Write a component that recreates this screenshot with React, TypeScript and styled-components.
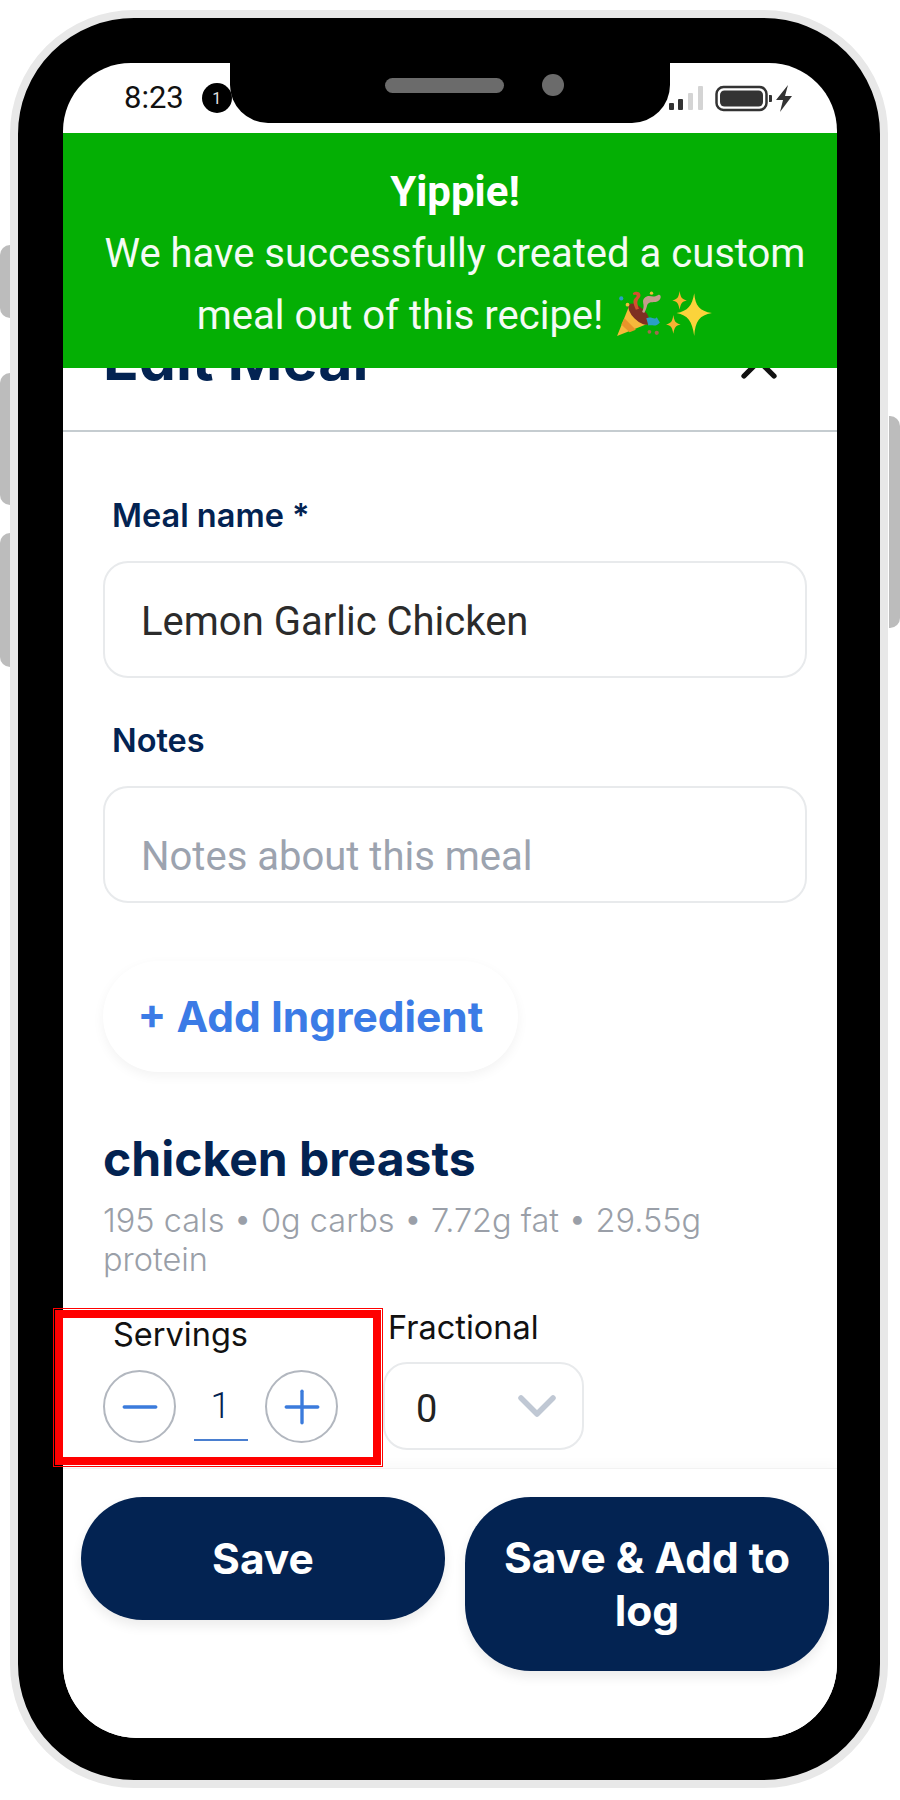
import React from 'react';
import styled, { createGlobalStyle } from 'styled-components';
import { X, Minus, Plus } from 'lucide-react';

const Global = createGlobalStyle`
  html, body { margin: 0; padding: 0; background: #fff; }
  * { box-sizing: border-box; }
`;

const Page = styled.div`
  position: relative;
  width: 900px;
  height: 1800px;
  padding: 10px 12px 12px 10px;
  background: #fff;
  font-family: Inter, "Liberation Sans", sans-serif;
`;

const SideButton = styled.div<{ $side: 'left' | 'right'; $top: number; $h: number }>`
  position: absolute;
  top: ${p => p.$top}px;
  height: ${p => p.$h}px;
  width: 11px;
  background: #bcbcbc;
  ${p => (p.$side === 'left' ? 'left: 0; border-radius: 10px 0 0 10px;' : 'left: 889px; border-radius: 0 10px 10px 0;')}
`;

const Device = styled.div`
  position: relative;
  width: 878px;
  height: 1778px;
  border: 8px solid #e8e8e8;
  border-radius: 124px;
  background: #000;
  padding: 45px 43px 42px 45px;
`;

const Screen = styled.div`
  position: relative;
  height: 100%;
  background: #fff;
  border-radius: 68px 68px 74px 74px;
  overflow: hidden;
  display: flex;
  flex-direction: column;
`;

const Notch = styled.div`
  position: absolute;
  z-index: 3;
  top: 0;
  left: 167px;
  width: 440px;
  height: 60px;
  background: #000;
  border-radius: 0 0 38px 38px;
  display: flex;
  align-items: center;
  gap: 38px;
  padding: 0 0 16px 155px;
`;

const Speaker = styled.div`
  width: 119px;
  height: 15px;
  border-radius: 8px;
  background: #6b6b6b;
`;

const Camera = styled.div`
  width: 22px;
  height: 22px;
  border-radius: 50%;
  background: #6b6b6b;
`;

const StatusBar = styled.div`
  flex: none;
  height: 70px;
  display: flex;
  align-items: flex-start;
  justify-content: space-between;
  padding: 19px 45px 0 61px;
`;

const StatusLeft = styled.div`
  display: flex;
  align-items: center;
  gap: 18px;
`;

const Time = styled.span`
  font-family: Roboto, sans-serif;
  font-size: 31px;
  line-height: 32px;
  color: #111;
`;

const Badge = styled.span`
  width: 30px;
  height: 30px;
  border-radius: 50%;
  background: #000;
  color: #e0e0e0;
  font-family: Roboto, sans-serif;
  font-size: 16px;
  display: flex;
  align-items: center;
  justify-content: center;
`;

const StatusRight = styled.svg`
  display: block;
  margin-top: 3px;
`;

const Banner = styled.div`
  position: absolute;
  z-index: 2;
  top: 70px;
  left: 0;
  right: 0;
  height: 235px;
  background: #04af04;
  color: #f4fbf4;
  font-family: Roboto, sans-serif;
  font-size: 40px;
  line-height: 62px;
  text-align: center;
  padding: 28px 0 0 10px;
`;

const BannerTitle = styled.div`
  font-size: 42px;
  font-weight: 700;
  color: #fff;
`;

const Emoji = styled.svg`
  display: inline-block;
  vertical-align: -8px;
  margin-left: 2px;
`;

const Header = styled.div`
  flex: none;
  height: 299px;
  border-bottom: 2px solid #c5ccd0;
  display: flex;
  align-items: flex-end;
  justify-content: space-between;
  padding: 0 48px 39px 40px;
`;

const Title = styled.div`
  font-size: 59px;
  font-weight: 700;
  line-height: 64px;
  color: #032352;
`;

const CloseIcon = styled(X)`
  display: block;
`;

const Body = styled.div`
  flex: 1;
  min-height: 0;
  overflow: hidden;
  padding: 66px 30px 0 40px;
`;

const FieldLabel = styled.div`
  font-size: 32.5px;
  font-weight: 600;
  line-height: 36px;
  color: #032352;
  padding-left: 9px;
  margin-bottom: 27px;
`;

const InputBox = styled.div<{ $placeholder?: boolean }>`
  height: 117px;
  border: 2px solid #e8eaec;
  border-radius: 25px;
  padding: ${p => (p.$placeholder ? '23px' : '4px')} 36px 0;
  display: flex;
  align-items: center;
  font-family: Roboto, sans-serif;
  font-size: 40px;
  color: ${p => (p.$placeholder ? '#9ca3af' : '#2b2b2b')};
  margin-bottom: ${p => (p.$placeholder ? '58px' : '45px')};
`;

const AddButton = styled.div`
  width: 415px;
  height: 111px;
  border-radius: 56px;
  background: #fff;
  box-shadow: 0 4px 12px rgba(0, 0, 0, 0.05);
  color: #3b7be6;
  font-size: 42.5px;
  font-weight: 700;
  display: flex;
  align-items: center;
  justify-content: center;
  margin-bottom: 59px;
`;

const IngredientName = styled.div`
  font-size: 48px;
  font-weight: 700;
  line-height: 56px;
  color: #032352;
  margin-bottom: 14px;
`;

const Macros = styled.div`
  font-size: 32.5px;
  font-weight: 300;
  line-height: 39px;
  color: #9a9fa8;
  margin-bottom: 37px;
`;

const ControlsRow = styled.div`
  display: flex;
  align-items: flex-start;
`;

const ServingsColumn = styled.div`
  width: 280px;
`;

const Highlight = styled.div`
  position: absolute;
  z-index: 4;
  pointer-events: none;
  left: 37px;
  top: 1292px;
  width: 326px;
  height: 155px;
  border: 8px solid #ff0000;
  outline: 1px solid #ff0000;
  outline-offset: 1px;
`;

const ControlLabel = styled.div<{ $indent: number }>`
  font-size: 32.5px;
  line-height: 38px;
  color: #111;
  padding-left: ${p => p.$indent}px;
`;

const Stepper = styled.div`
  display: flex;
  align-items: center;
  margin-top: 16px;
`;

const RoundButton = styled.div`
  width: 73px;
  height: 73px;
  border-radius: 50%;
  border: 2px solid #b2b7bf;
  color: #3b7bdc;
  display: flex;
  align-items: center;
  justify-content: center;
  flex: none;
`;

const CountValue = styled.div`
  width: 54px;
  margin: 0 17.5px;
  height: 68px;
  border-bottom: 2px solid #4a7fd0;
  color: #032352;
  font-family: Roboto, sans-serif;
  font-size: 36px;
  font-weight: 300;
  display: flex;
  align-items: center;
  justify-content: center;
`;

const FractionColumn = styled.div`
  margin-top: -7px;
`;

const SelectBox = styled.div`
  width: 201px;
  height: 88px;
  margin-top: 15px;
  border: 2px solid #e8eaec;
  border-radius: 24px;
  padding: 0 26px 0 31px;
  display: flex;
  align-items: center;
  justify-content: space-between;
  font-family: Roboto, sans-serif;
  font-size: 38px;
  color: #222;
`;

const SelectValue = styled.span`
  padding-top: 5px;
`;

const Chevron = styled.svg`
  display: block;
`;

const Footer = styled.div`
  flex: none;
  height: 270px;
  background: #fff;
  border-top: 1px solid #f2f2f2;
  box-shadow: 0 -6px 10px rgba(0, 0, 0, 0.02);
  display: flex;
  align-items: flex-start;
  gap: 20px;
  padding: 28px 8px 0 18px;
  position: relative;
`;

const ActionButton = styled.div`
  flex: 1;
  min-height: 123px;
  padding: 34px 30px;
  border-radius: 66px;
  background: #032352;
  box-shadow: 0 6px 12px rgba(0, 0, 0, 0.08);
  color: #fff;
  font-size: 42.5px;
  font-weight: 700;
  line-height: 53px;
  text-align: center;
  display: flex;
  align-items: center;
  justify-content: center;
`;

export default function App() {
  return (
    <Page>
      <Global />
      <SideButton $side="left" $top={245} $h={73} />
      <SideButton $side="left" $top={373} $h={132} />
      <SideButton $side="left" $top={533} $h={134} />
      <SideButton $side="right" $top={416} $h={212} />
      <Device>
        <Highlight />
        <Screen>
          <Notch>
            <Speaker />
            <Camera />
          </Notch>
          <StatusBar>
            <StatusLeft>
              <Time>8:23</Time>
              <Badge>1</Badge>
            </StatusLeft>
            <StatusRight width="124" height="28" viewBox="0 0 124 28">
              <rect x="1" y="18" width="5" height="7" rx="1" fill="#333" />
              <rect x="10" y="14" width="5" height="11" rx="1" fill="#333" />
              <rect x="20" y="8" width="5" height="17" rx="1" fill="#d4d4d4" />
              <rect x="30" y="1" width="5" height="24" rx="1" fill="#d4d4d4" />
              <rect x="48.5" y="2" width="50" height="23" rx="7" fill="none" stroke="#333" strokeWidth="2.5" />
              <rect x="52" y="5.5" width="43" height="16" rx="4.5" fill="#333" />
              <path d="M101 10 h2 a1 1 0 0 1 1 1 v5 a1 1 0 0 1 -1 1 h-2z" fill="#333" />
              <path d="M120 0 L108 15 H115 L112 27 L124 11 H117 Z" fill="#333" />
            </StatusRight>
          </StatusBar>
          <Banner>
            <BannerTitle>Yippie!</BannerTitle>
            <div>We have successfully created a custom</div>
            <div>
              meal out of this recipe!{' '}
              <Emoji width="48" height="48" viewBox="0 0 46 46">
                <path d="M14 15 L32 33 L2 45 Z" fill="#f6b93b" />
                <path d="M9 28 L20 39 L14 41.5 L6 34 Z" fill="#e8942a" />
                <ellipse cx="23" cy="24" rx="6" ry="13" transform="rotate(-45 23 24)" fill="#7e2f22" />
                <path d="M26 22 C30 15 24 12 29 8 C33 5 36 9 41 6 C44 4 45 9 42 11 C38 14 33 11 31 15 C30 19 29 21 28 23 Z" fill="#c69c8f" />
                <path d="M30 28 C35 26 38 30 40 27 L43 32 C39 37 36 34 32 35 Z" fill="#2a9fc4" />
                <path d="M17 4 c5 -4 10 1 6 5 c-3 3 -1 7 0 10 l-3 1 c-2 -5 -4 -9 0 -12 c2 -2 0 -3 -2 -2 Z" fill="#d4502f" />
                <circle cx="6" cy="9" r="2" fill="#2a9fc4" />
                <circle cx="12" cy="15" r="1.8" fill="#f6b93b" />
                <circle cx="40" cy="42" r="2" fill="#a06a50" />
                <circle cx="33" cy="41" r="1.8" fill="#a06a50" />
                <circle cx="35" cy="4" r="1.6" fill="#f6b93b" />
              </Emoji>
              <Emoji width="48" height="48" viewBox="0 0 46 46">
                <path d="M28 4 C29 16 33 21 45 23 C33 25 29 31 28 45 C26 31 22 25 11 23 C22 21 26 16 28 4 Z" fill="#fbd33b" />
                <path d="M14 2 C15 8 16 10 21 11 C16 12 15 14 14 20 C13 14 12 12 7 11 C12 10 13 8 14 2 Z" fill="#f9b233" />
                <path d="M8 25 C9 31 10 33 15 34 C10 35 9 37 8 43 C7 37 6 35 1 34 C6 33 7 31 8 25 Z" fill="#f9b233" />
              </Emoji>
            </div>
          </Banner>
          <Header>
            <Title>Edit Meal</Title>
            <CloseIcon size={60} color="#111" strokeWidth={2.1} />
          </Header>
          <Body>
            <FieldLabel>Meal name *</FieldLabel>
            <InputBox>Lemon Garlic Chicken</InputBox>
            <FieldLabel>Notes</FieldLabel>
            <InputBox $placeholder>Notes about this meal</InputBox>
            <AddButton>+ Add Ingredient</AddButton>
            <IngredientName>chicken breasts</IngredientName>
            <Macros>195 cals • 0g carbs • 7.72g fat • 29.55g protein</Macros>
            <ControlsRow>
              <ServingsColumn>
                <ControlLabel $indent={10}>Servings</ControlLabel>
                <Stepper>
                  <RoundButton><Minus size={54} strokeWidth={1.5} /></RoundButton>
                  <CountValue>1</CountValue>
                  <RoundButton><Plus size={54} strokeWidth={1.5} /></RoundButton>
                </Stepper>
              </ServingsColumn>
              <FractionColumn>
                <ControlLabel $indent={5}>Fractional</ControlLabel>
                <SelectBox>
                  <SelectValue>0</SelectValue>
                  <Chevron width="38" height="22" viewBox="0 0 38 22">
                    <path d="M3 3 L19 19 L35 3" fill="none" stroke="#c0c8d4" strokeWidth="5.5" strokeLinecap="round" strokeLinejoin="round" />
                  </Chevron>
                </SelectBox>
              </FractionColumn>
            </ControlsRow>
          </Body>
          <Footer>
            <ActionButton>Save</ActionButton>
            <ActionButton>Save &amp; Add to log</ActionButton>
          </Footer>
        </Screen>
      </Device>
    </Page>
  );
}
